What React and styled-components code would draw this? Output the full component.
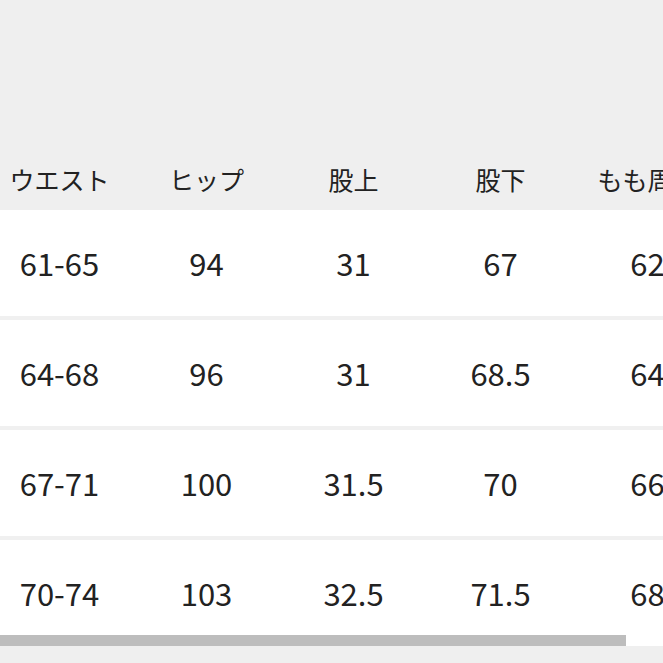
import React from 'react';
import styled, { createGlobalStyle } from 'styled-components';

const GlobalStyle = createGlobalStyle`
    html, body {
        margin: 0;
        padding: 0;
        background-color: #efefef;
        overflow: hidden;
    }
    body {
        font-family: "Noto Sans CJK JP", "Noto Sans", sans-serif;
        color: #222;
    }
`;

const columns = ['ウエスト', 'ヒップ', '股上', '股下', 'もも周り'];

const rows = [
    ['61-65', '94', '31', '67', '62'],
    ['64-68', '96', '31', '68.5', '64'],
    ['67-71', '100', '31.5', '70', '66'],
    ['70-74', '103', '32.5', '71.5', '68'],
];

const App = () => {
    return (
        <Page>
            <GlobalStyle />
            <TopSpace />
            <ScrollArea>
                <Table>
                    <HeaderRow>
                        {columns.map((c) => (
                            <HeaderCell key={c}>{c}</HeaderCell>
                        ))}
                    </HeaderRow>
                    {rows.map((r, i) => (
                        <BodyRow key={i} last={i === rows.length - 1}>
                            {r.map((v, j) => (
                                <Cell key={j}>{v}</Cell>
                            ))}
                        </BodyRow>
                    ))}
                </Table>
                <ScrollThumb />
            </ScrollArea>
        </Page>
    );
};

const Page = styled.div`
    width: 663px;
    height: 663px;
    overflow: hidden;
    background-color: #efefef;
`;

const TopSpace = styled.div`
    height: 151px;
`;

const ScrollArea = styled.div`
    position: relative;
    width: 663px;
    height: 495px;
    overflow: hidden;
    background-color: #fff;
`;

const Table = styled.div`
    display: flex;
    flex-direction: column;
    width: 735px;
    margin-left: -14px;
`;

const HeaderRow = styled.div`
    display: grid;
    grid-template-columns: repeat(5, 147px);
    height: 59px;
    background-color: #efefef;
`;

const HeaderCell = styled.div`
    display: flex;
    align-items: center;
    justify-content: center;
    padding-bottom: 3px;
    font-size: 25px;
    white-space: nowrap;
    color: #222;
`;

const BodyRow = styled.div`
    display: grid;
    grid-template-columns: repeat(5, 147px);
    height: 106px;
    background-color: #fff;
    border-bottom: ${(props) => (props.last ? 'none' : '4px solid #f0f0f0')};
`;

const Cell = styled.div`
    display: flex;
    align-items: center;
    justify-content: center;
    padding-bottom: 2px;
    font-size: 31px;
    color: #222;
`;

const ScrollThumb = styled.div`
    position: absolute;
    left: 0;
    bottom: 0;
    width: 626px;
    height: 11px;
    background-color: #bdbdbd;
`;

export default App;
